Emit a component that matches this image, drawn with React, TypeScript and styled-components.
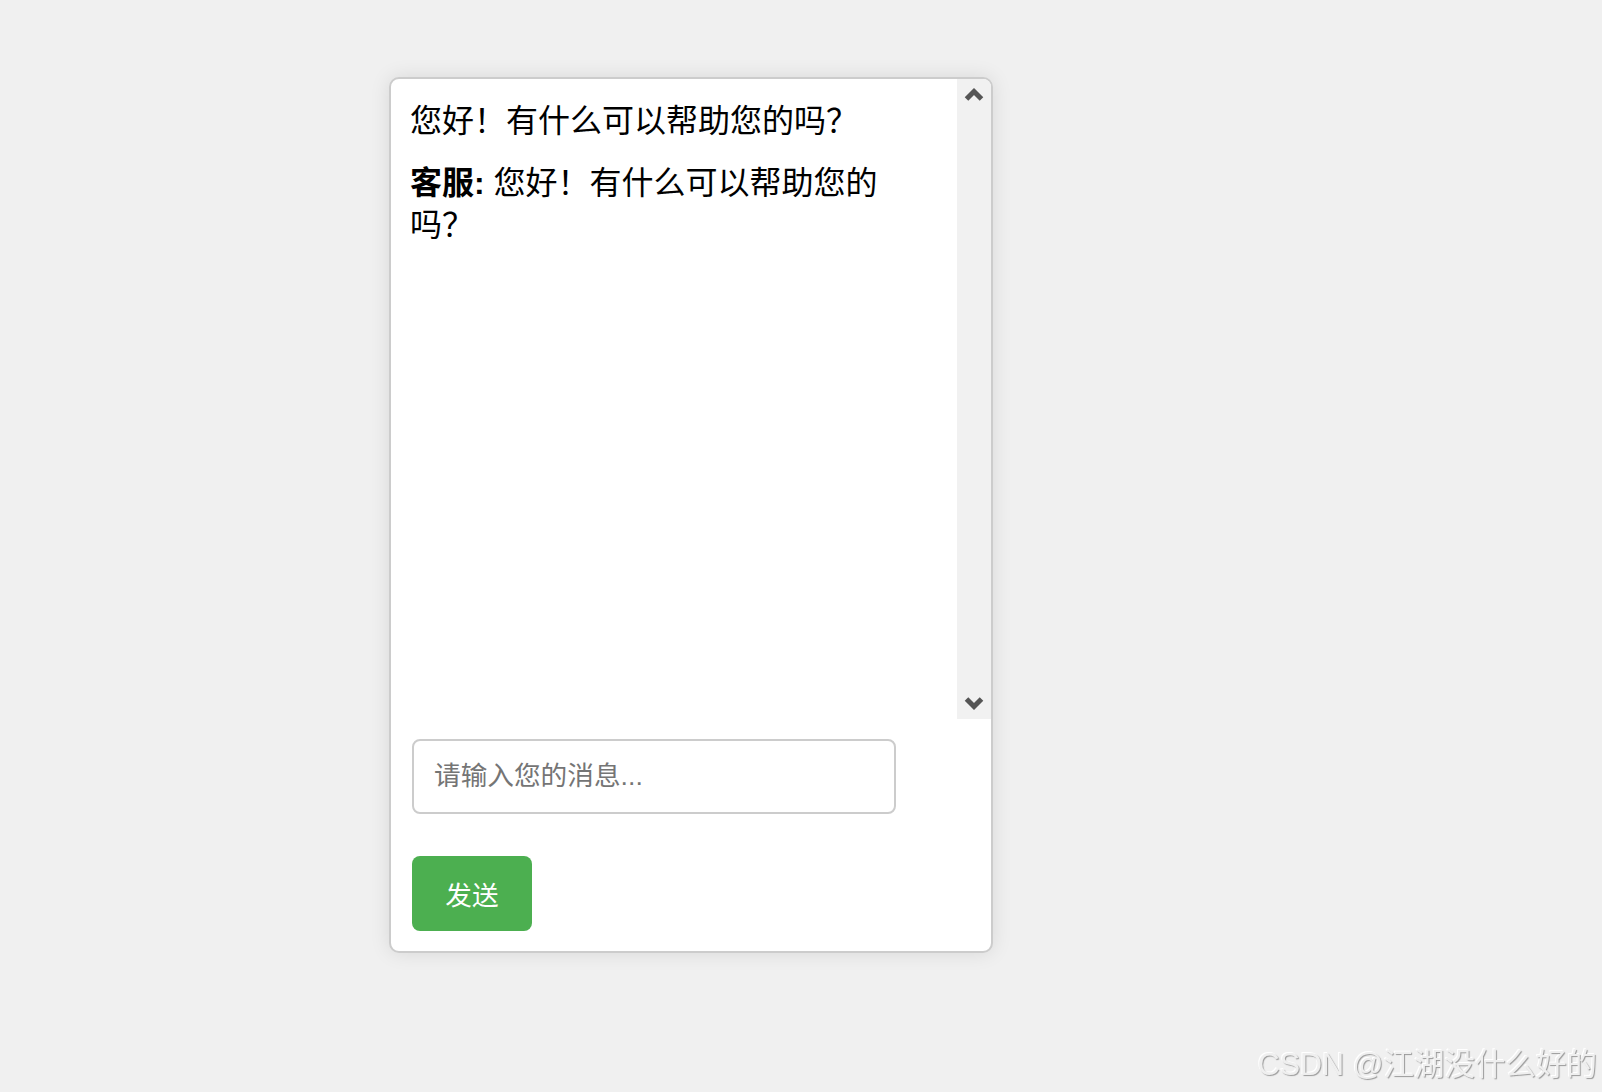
import React from "react";
import styled, { createGlobalStyle } from "styled-components";

const GlobalStyle = createGlobalStyle`
  html, body {
    margin: 0;
    padding: 0;
    background: #f0f0f0;
  }
  body {
    font-family: "Liberation Sans", "Noto Sans CJK SC", sans-serif;
    min-height: 1092px;
  }
`;

const Page = styled.div`
  padding: 77px 0 0 389px;
`;

const ChatContainer = styled.div`
  width: 600px;
  border: 2px solid #cccccc;
  border-radius: 10px;
  background: #ffffff;
  box-shadow: 0 0 20px rgba(0, 0, 0, 0.1);
  overflow: hidden;
`;

const ChatBox = styled.div`
  height: 640px;
  display: flex;
`;

const Messages = styled.div`
  flex: 1;
  padding: 21px 20px 20px 19px;
  font-size: 32px;
  line-height: 42px;
  color: #000;
`;

const Message = styled.div`
  margin-bottom: 20px;
  strong {
    font-weight: 700;
  }
`;

const ScrollRail = styled.div`
  width: 34px;
  background: #f1f1f1;
  display: flex;
  flex-direction: column;
  justify-content: space-between;
`;

const ArrowButton = styled.div`
  width: 34px;
  height: 34px;
  svg {
    display: block;
  }
`;

const Footer = styled.div`
  display: flex;
  flex-direction: column;
  align-items: flex-start;
  gap: 42px;
  padding: 20px 20px 20px 21px;
`;

const MessageInput = styled.input`
  box-sizing: border-box;
  width: 484px;
  height: 75px;
  padding: 0 20px;
  border: 2px solid #cccccc;
  border-radius: 8px;
  font-family: "Liberation Sans", "Noto Sans CJK SC", sans-serif;
  font-size: 26.67px;
  outline: none;
  &::placeholder {
    color: #757575;
  }
`;

const SendButton = styled.button`
  width: 120px;
  height: 75px;
  border: none;
  border-radius: 8px;
  background: #4caf50;
  color: #ffffff;
  font-family: "Liberation Sans", "Noto Sans CJK SC", sans-serif;
  font-size: 26.67px;
  cursor: pointer;
`;

const Watermark = styled.div`
  position: fixed;
  right: 5px;
  bottom: 8px;
  font-family: "Liberation Sans", "Noto Sans CJK SC", sans-serif;
  font-size: 30.5px;
  color: #efefef;
  text-shadow: 1px 1px 1px #9a9a9a, -1px -1px 0 #ffffff;
  white-space: nowrap;
`;

const Chevron = ({ dir }: { dir: "up" | "down" }) => (
  <svg width="34" height="34" viewBox="0 0 34 34">
    <polyline
      points={dir === "up" ? "9.5,20 17,12.5 24.5,20" : "9.5,14 17,21.5 24.5,14"}
      fill="none"
      stroke="#555555"
      strokeWidth="5"
    />
  </svg>
);

export default function App() {
  return (
    <Page>
      <GlobalStyle />
      <ChatContainer>
        <ChatBox>
          <Messages>
            <Message>您好！有什么可以帮助您的吗？</Message>
            <Message>
              <strong>客服:</strong> 您好！有什么可以帮助您的吗？
            </Message>
          </Messages>
          <ScrollRail>
            <ArrowButton>
              <Chevron dir="up" />
            </ArrowButton>
            <ArrowButton>
              <Chevron dir="down" />
            </ArrowButton>
          </ScrollRail>
        </ChatBox>
        <Footer>
          <MessageInput placeholder="请输入您的消息..." />
          <SendButton>发送</SendButton>
        </Footer>
      </ChatContainer>
      <Watermark>CSDN @江湖没什么好的</Watermark>
    </Page>
  );
}
